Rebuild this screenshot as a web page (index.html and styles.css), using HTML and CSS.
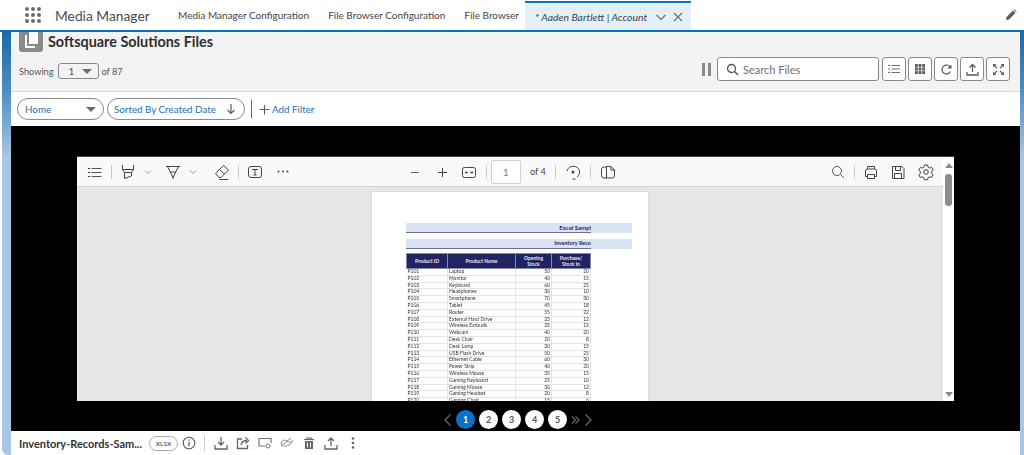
FILE: index.html
```html
<!DOCTYPE html>
<html>
<head>
  <title>Media Manager</title>
  <link rel="stylesheet" href="styles.css">
</head>
<body>
  <header class="topbar">
    <div class="waffle"><i></i><i></i><i></i><i></i><i></i><i></i><i></i><i></i><i></i></div>
    <div class="app-name">Media Manager</div>
    <nav class="tabs">
      <a class="tab">Media Manager Configuration</a>
      <a class="tab">File Browser Configuration</a>
      <a class="tab">File Browser</a>
      <div class="tab-active">
        <span class="tab-title">* Aaden Bartlett | Account</span>
        <svg width="12" height="12" viewBox="0 0 12 12"><path d="M1.500 4l4.500 4.500L10.500 4" fill="none" stroke="#706e6b" stroke-width="1.100"/></svg>
        <svg width="12" height="12" viewBox="0 0 12 12"><path d="M2 2l8 8M10 2l-8 8" fill="none" stroke="#706e6b" stroke-width="1.100"/></svg>
      </div>
    </nav>
    <svg class="pencil" width="12" height="12" viewBox="0 0 12 12"><path d="M1 11l.6-3L8 1.600 10.400 4 4 10.400zM8.800 1l.8-.6L11.600 2.400 11 3.200z" fill="#5c5c5c"/></svg>
  </header>

  <div class="workspace">
    <div class="card">
      <section class="page-head">
        <div class="title-row">
          <div class="title-icon">
            <svg width="16" height="18" viewBox="0 0 16 18"><path d="M6 0h9v12H6z" fill="#fff"/><path d="M2 3h2v11h8v2H2z" fill="#fff"/></svg>
          </div>
          <h1>Softsquare Solutions Files</h1>
        </div>
        <div class="tools-row">
          <span class="muted">Showing</span>
          <div class="page-select"><span>1</span><b class="caret"></b></div>
          <span class="muted">of 87</span>
          <div class="pause"><i></i><i></i></div>
          <div class="search">
            <svg width="13" height="13" viewBox="0 0 13 13"><circle cx="5.500" cy="5.500" r="4" fill="none" stroke="#555" stroke-width="1.300"/><path d="M8.500 8.500L12 12" stroke="#555" stroke-width="1.400"/></svg>
            <span>Search Files</span>
          </div>
          <button class="icon-btn"><svg width="12" height="12" viewBox="0 0 12 12"><path d="M3.500 2.500H12M3.500 6H12M3.500 9.500H12" stroke="#706e6b"/><path d="M0 2.500h2M0 6h2M0 9.500h2" stroke="#706e6b"/></svg></button>
          <button class="icon-btn"><svg width="12" height="12" viewBox="0 0 12 12"><path d="M1 1h2.800v10H1zM4.600 1h2.800v10H4.600zM8.200 1H11v10H8.200z" fill="#5c5c5c"/><path d="M0 4.300h12M0 7.700h12" stroke="#f3f3f3" stroke-width=".6"/></svg></button>
          <button class="icon-btn"><svg width="13" height="13" viewBox="0 0 13 13"><path d="M10.500 8.500A4.500 4.500 0 1 1 9.500 3.200L11 4.500" fill="none" stroke="#5c5c5c" stroke-width="1.200"/><path d="M11.500 1.500v4h-4z" fill="#5c5c5c"/></svg></button>
          <button class="icon-btn"><svg width="13" height="13" viewBox="0 0 13 13"><path d="M6.500 9V2M3.500 4.500l3-3 3 3" fill="none" stroke="#5c5c5c" stroke-width="1.300"/><path d="M1 9v3h11V9" fill="none" stroke="#5c5c5c" stroke-width="1.300"/></svg></button>
          <button class="icon-btn"><svg width="13" height="13" viewBox="0 0 13 13"><path d="M1 1h3.500L1 4.500zM12 1v3.500L8.500 1zM1 12V8.500L4.500 12zM12 12H8.500L12 8.500z" fill="#5c5c5c"/><path d="M2.500 2.500l2.500 2.500M10.500 2.500L8 5M2.500 10.500L5 8M10.500 10.500L8 8" stroke="#5c5c5c" stroke-width="1.100"/></svg></button>
        </div>
      </section>

      <section class="filter-row">
        <div class="pill pill-home"><span>Home</span><b class="caret"></b></div>
        <div class="pill pill-sort">
          <span>Sorted By Created Date</span>
          <svg width="10" height="12" viewBox="0 0 10 12"><path d="M5 1v9M1.500 7L5 10.500 8.500 7" fill="none" stroke="#5c5c5c" stroke-width="1.200"/></svg>
        </div>
        <div class="filter-sep"></div>
        <svg width="11" height="11" viewBox="0 0 11 11"><path d="M5.500 1v9.500M.5 5.500H10.500" stroke="#5c5c5c" stroke-width="1.100"/></svg>
        <a class="add-filter">Add Filter</a>
      </section>

      <section class="stage">
        <div class="viewer">
          <div class="viewer-main">
            <div class="pdf-bar">
              <svg class="tool" viewBox="0 0 20 20"><path d="M6.500 6.500h10M6.500 10.500h10M6.500 14.500h10" stroke="#555" fill="none"/><path d="M3 6.500h2M3 10.500h2M3 14.500h2" stroke="#333"/></svg>
              <span class="bar-sep"></span>
              <svg class="tool" viewBox="0 0 20 20"><path d="M4.500 3v4.500h11V3M4.500 7.500l2 3v6l7-2.500v-3.500l2-3M6.500 10.500h7" fill="none" stroke="#444"/></svg>
              <svg class="chev" viewBox="0 0 12 12"><path d="M3 4.500l3 3 3-3" fill="none" stroke="#999"/></svg>
              <svg class="tool" viewBox="0 0 20 20"><path d="M3 4.500h14M4.500 4.500L10 15.500l5.500-11M7 10h6M10 15.500V17" fill="none" stroke="#444"/></svg>
              <svg class="chev" viewBox="0 0 12 12"><path d="M3 4.500l3 3 3-3" fill="none" stroke="#999"/></svg>
              <svg class="tool eraser" viewBox="0 0 20 20"><path d="M3.500 11.500l8-8 5 4.500-7.500 7.500H7zM7.500 7.500l5 4.500M7 17.500h9" fill="none" stroke="#444"/></svg>
              <span class="bar-sep"></span>
              <svg class="tool" viewBox="0 0 20 20"><rect x="3.500" y="4.500" width="13" height="11" rx="2.500" fill="none" stroke="#444"/><path d="M7 7.500h6M10 7.500v5.500M8.500 13h3" fill="none" stroke="#444"/></svg>
              <svg class="tool dots" viewBox="0 0 20 20"><circle cx="5.500" cy="9.500" r="1" fill="#444"/><circle cx="10" cy="9.500" r="1" fill="#444"/><circle cx="14.500" cy="9.500" r="1" fill="#444"/></svg>

              <div class="bar-center">
                <svg class="tool" viewBox="0 0 20 20"><path d="M6 10.500h8" stroke="#666"/></svg>
                <svg class="tool" viewBox="0 0 20 20"><path d="M6 10.500h9M10.500 6v9" stroke="#444"/></svg>
                <svg class="tool" viewBox="0 0 20 20"><rect x="3.500" y="5.500" width="13" height="10" rx="2" fill="none" stroke="#444"/><path d="M6 10.500h2.500M11.500 10.500H14" stroke="#333" stroke-width="1.600"/></svg>
                <span class="bar-sep"></span>
                <div class="pdf-page-input">1</div>
                <span class="pdf-of">of 4</span>
                <span class="bar-sep"></span>
                <svg class="tool" viewBox="0 0 20 20"><path d="M4 9A6.500 6.500 0 0 1 16.500 9c.3 2.500-.5 4.500-2.500 6" fill="none" stroke="#444"/><circle cx="10" cy="10" r="1.500" fill="#444"/><path d="M9.500 17h3" stroke="#444"/></svg>
                <span class="bar-sep"></span>
                <svg class="tool" viewBox="0 0 20 20"><path d="M8.500 5H6a2.500 2.500 0 0 0-2.500 2.500v6A2.500 2.500 0 0 0 6 16h8.500a2 2 0 0 0 2-2V8l-3.500-3.500H8.500zm0 0v11M13 4.500V8h3.500" fill="none" stroke="#444"/></svg>
              </div>

              <div class="bar-right">
                <svg class="tool" viewBox="0 0 20 20"><circle cx="9" cy="9" r="4.500" fill="none" stroke="#555"/><path d="M12.500 12.500L16 16" stroke="#555"/></svg>
                <span class="bar-sep"></span>
                <svg class="tool" viewBox="0 0 20 20"><path d="M6.500 7V4.500h7V7M6.500 14.500H4.500V9a2 2 0 0 1 2-2h7a2 2 0 0 1 2 2v5.500h-2M6.500 12.500h7v4h-7z" fill="none" stroke="#444"/></svg>
                <svg class="tool save" viewBox="0 0 20 20"><path d="M4.500 4.500h9.500l2 2v10H4.500zM7.500 4.500v4h5v-4M6.500 16.500v-5h7v5" fill="none" stroke="#444"/></svg>
                <svg class="tool gear" viewBox="0 0 20 20"><circle cx="10" cy="10" r="2.300" fill="none" stroke="#444"/><path d="M8.500 3h3l.5 2 1.700 1 2-.6 1.500 2.600-1.500 1.400v2l1.500 1.400-1.500 2.600-2-.6-1.700 1-.5 2h-3l-.5-2-1.700-1-2 .6L2.800 13l1.500-1.400v-2L2.800 8l1.500-2.600 2 .6L8 5z" fill="none" stroke="#444"/></svg>
              </div>
            </div>
            <div class="pdf-area">
              <div class="pdf-page">
                <div class="sheet-title">Excel Sampl</div>
                <div class="sheet-title sheet-sub">Inventory Reco</div>
                <table class="sheet">
                  <thead>
                    <tr><th>Product ID</th><th>Product Name</th><th>Opening Stock</th><th>Purchase/ Stock In</th></tr>
                  </thead>
                  <tbody>
                    <tr><td>P101</td><td>Laptop</td><td>50</td><td>20</td></tr>
                    <tr><td>P102</td><td>Monitor</td><td>40</td><td>15</td></tr>
                    <tr><td>P103</td><td>Keyboard</td><td>60</td><td>25</td></tr>
                    <tr><td>P104</td><td>Headphones</td><td>30</td><td>10</td></tr>
                    <tr><td>P105</td><td>Smartphone</td><td>70</td><td>30</td></tr>
                    <tr><td>P106</td><td>Tablet</td><td>45</td><td>18</td></tr>
                    <tr><td>P107</td><td>Router</td><td>55</td><td>22</td></tr>
                    <tr><td>P108</td><td>External Hard Drive</td><td>25</td><td>12</td></tr>
                    <tr><td>P109</td><td>Wireless Earbuds</td><td>35</td><td>15</td></tr>
                    <tr><td>P110</td><td>Webcam</td><td>40</td><td>20</td></tr>
                    <tr><td>P111</td><td>Desk Chair</td><td>20</td><td>8</td></tr>
                    <tr><td>P112</td><td>Desk Lamp</td><td>30</td><td>15</td></tr>
                    <tr><td>P113</td><td>USB Flash Drive</td><td>50</td><td>25</td></tr>
                    <tr><td>P114</td><td>Ethernet Cable</td><td>60</td><td>30</td></tr>
                    <tr><td>P115</td><td>Power Strip</td><td>40</td><td>20</td></tr>
                    <tr><td>P116</td><td>Wireless Mouse</td><td>35</td><td>15</td></tr>
                    <tr><td>P117</td><td>Gaming Keyboard</td><td>25</td><td>10</td></tr>
                    <tr><td>P118</td><td>Gaming Mouse</td><td>30</td><td>12</td></tr>
                    <tr><td>P119</td><td>Gaming Headset</td><td>20</td><td>8</td></tr>
                    <tr><td>P120</td><td>Gaming Chair</td><td>15</td><td>6</td></tr>
                  </tbody>
                </table>
              </div>
            </div>
          </div>
          <div class="scrollbar">
            <b class="scroll-up"></b>
            <div class="scroll-thumb"></div>
            <b class="scroll-down"></b>
          </div>
        </div>
        <div class="pager">
          <svg width="9" height="14" viewBox="0 0 9 14"><path d="M7.500 1.500L2 7l5.500 5.500" fill="none" stroke="#666" stroke-width="1.400"/></svg>
          <span class="pager-dot is-on">1</span>
          <span class="pager-dot">2</span>
          <span class="pager-dot">3</span>
          <span class="pager-dot">4</span>
          <span class="pager-dot">5</span>
          <svg width="9" height="14" viewBox="0 0 9 14"><path d="M1 3.500L4.500 7 1 10.500M4.500 3.500L8 7l-3.500 3.500" fill="none" stroke="#666" stroke-width="1.200"/></svg>
          <svg width="9" height="14" viewBox="0 0 9 14"><path d="M1.500 1.500L7 7l-5.500 5.500" fill="none" stroke="#666" stroke-width="1.400"/></svg>
        </div>
      </section>

      <footer class="file-bar">
        <strong class="file-name">Inventory-Records-Sam...</strong>
        <span class="file-type">XLSX</span>
        <svg width="14" height="14" viewBox="0 0 14 14"><circle cx="7" cy="7" r="5.800" fill="none" stroke="#555" stroke-width="1.100"/><path d="M7 6v4M7 3.500v1.300" stroke="#555" stroke-width="1.300"/></svg>
        <span class="file-sep"></span>
        <svg width="14" height="14" viewBox="0 0 14 14"><path d="M7 1v8M4 6l3 3 3-3M1 9v4h12V9" fill="none" stroke="#666" stroke-width="1.300"/></svg>
        <svg width="14" height="14" viewBox="0 0 14 14"><path d="M6 3H1.500v9.500h10V9M5 9c.5-3 2.500-4.500 6-4.500M9.500 1.500l3 3-3 3" fill="none" stroke="#666" stroke-width="1.300"/></svg>
        <svg width="14" height="14" viewBox="0 0 14 14"><path d="M7 10H1V2.500h12V7" fill="none" stroke="#777" stroke-width="1.200"/><circle cx="10" cy="10" r="2" fill="none" stroke="#777"/></svg>
        <svg width="14" height="14" viewBox="0 0 14 14"><path d="M1 7c1.500-3 4-3.500 6-2 2 2 4 1.500 6-1M1 10l10-8M1 7c1.500 3 3 3.500 5 3 2 0 4-1 6-4" fill="none" stroke="#888"/></svg>
        <svg width="14" height="14" viewBox="0 0 14 14"><path d="M2 3.500h10M5 3.500V2h4v1.500" fill="none" stroke="#666" stroke-width="1.200"/><path d="M3 5h8v8H3z" fill="#666"/><path d="M5.500 6.500v5M8.500 6.500v5" stroke="#fff"/></svg>
        <svg width="14" height="14" viewBox="0 0 14 14"><path d="M7 10V2M4 5l3-3 3 3M1 9v4h12V9" fill="none" stroke="#666" stroke-width="1.300"/></svg>
        <svg width="14" height="14" viewBox="0 0 14 14"><circle cx="7" cy="2.500" r="1.300" fill="#666"/><circle cx="7" cy="7" r="1.300" fill="#666"/><circle cx="7" cy="11.500" r="1.300" fill="#666"/></svg>
      </footer>
    </div>
  </div>
</body>
</html>
```

FILE: styles.css
```css
html, body {
  margin: 0;
  height: 455px;
  overflow: hidden;
}
body {
  font-family: Lato, "Noto Sans", sans-serif;
  font-size: 11px;
  color: #444;
  background: #fff;
  display: flex;
  flex-direction: column;
  filter: blur(0.3px);
}
svg {
  flex: none;
  display: block;
}

/* top navigation */
.topbar {
  height: 30px;
  display: flex;
  align-items: center;
  border-bottom: 2px solid #0a70c8;
  background: #fff;
  flex: none;
}
.waffle {
  margin-left: 25px;
  width: 16px;
  display: grid;
  grid-template-columns: repeat(3, 4px);
  gap: 2px;
}
.waffle i {
  width: 4px;
  height: 4px;
  border-radius: 50%;
  background: #6d6d6d;
}
.app-name {
  margin-left: 14px;
  width: 123px;
  font-size: 13.800px;
  color: #4a4a4a;
}
.tabs {
  display: flex;
  align-items: center;
  height: 30px;
}
.tab {
  margin-right: 19px;
  font-size: 10px;
  white-space: nowrap;
  color: #444;
}
.tab-active {
  box-sizing: border-box;
  margin-left: -13px;
  margin-top: 1px;
  width: 166px;
  height: 29px;
  padding-left: 10px;
  display: flex;
  align-items: center;
  background: #e3f0fa;
  border-top: 2px solid #0a70c8;
}
.tab-title {
  width: 120px;
  font-size: 10.400px;
  font-style: italic;
  white-space: nowrap;
  color: #444;
}
.tab-active svg + svg {
  margin-left: 5px;
}
.pencil {
  margin-left: auto;
  margin-right: 7px;
}

/* coloured strip around the app */
.workspace {
  flex: 1;
  min-height: 0;
  margin-left: 2px;
  padding: 0 4px 0 9px;
  border-bottom-left-radius: 6px;
  background: linear-gradient(180deg, #1b6aa8 0, #4f8fc4 60px, #a9c6e4 125px, #a9c6e4 100%);
}
.card {
  height: 100%;
  display: flex;
  flex-direction: column;
  background: #fff;
  overflow: hidden;
}

/* title area */
.page-head {
  box-sizing: border-box;
  height: 60px;
  flex: none;
  padding-left: 8px;
  padding-right: 8px;
  background: #f3f3f3;
  border-bottom: 1px solid #d8d8d8;
}
.title-row {
  height: 25px;
  display: flex;
}
.title-icon {
  width: 24px;
  height: 20px;
  background: #8a8a8a;
  border-radius: 0 0 3px 3px;
  display: flex;
  justify-content: center;
}
h1 {
  margin: 0 0 0 5px;
  font-size: 14.400px;
  line-height: 20px;
  font-weight: 700;
  color: #2e2e2e;
}
.tools-row {
  display: flex;
  align-items: center;
  height: 24px;
}
.muted {
  margin-top: 4px;
  font-size: 9.200px;
  color: #555;
}
.page-select {
  box-sizing: border-box;
  width: 41px;
  height: 16px;
  margin: 4px 3px 0 4px;
  padding: 0 6px 0 10px;
  border: 1px solid #8a8a8a;
  border-radius: 3px;
  display: flex;
  align-items: center;
  justify-content: space-between;
  font-size: 10px;
  color: #555;
}
.caret {
  width: 0;
  height: 0;
  border-left: 5px solid transparent;
  border-right: 5px solid transparent;
  border-top: 5px solid #6d6d6d;
}
.pause {
  margin-left: auto;
  margin-right: 6px;
  display: flex;
  gap: 3px;
}
.pause i {
  width: 3px;
  height: 13px;
  background: #8a8a8a;
}
.search {
  box-sizing: border-box;
  width: 162px;
  height: 24px;
  margin-right: 3px;
  padding-left: 8px;
  display: flex;
  align-items: center;
  gap: 4px;
  background: #fff;
  border: 1px solid #8a8a8a;
  border-radius: 3px;
  font-size: 11px;
  color: #707070;
}
.icon-btn {
  box-sizing: border-box;
  width: 24px;
  height: 24px;
  margin-right: 2px;
  padding: 0;
  display: flex;
  align-items: center;
  justify-content: center;
  background: #fff;
  border: 1px solid #8a8a8a;
  border-radius: 3px;
}

/* filters */
.filter-row {
  box-sizing: border-box;
  height: 34px;
  flex: none;
  padding-left: 6px;
  display: flex;
  align-items: center;
}
.pill {
  box-sizing: border-box;
  height: 22px;
  display: flex;
  align-items: center;
  justify-content: space-between;
  border: 1px solid #8a8a8a;
  border-radius: 11px;
  font-size: 9.800px;
  white-space: nowrap;
  color: #1b6fb5;
}
.pill-home {
  width: 87px;
  margin-right: 3px;
  padding: 0 7px;
}
.pill-sort {
  width: 138px;
  padding: 0 8px 0 6px;
}
.filter-sep {
  width: 1px;
  height: 18px;
  margin: 0 7px 0 6px;
  background: #666;
}
.add-filter {
  margin-left: 2px;
  font-size: 9.800px;
  color: #1b6fb5;
}

/* black document stage */
.stage {
  flex: 1;
  min-height: 0;
  display: flex;
  flex-direction: column;
  background: #000;
}
.viewer {
  width: 877px;
  height: 245px;
  margin: 30px 0 0 66px;
  flex: none;
  display: flex;
  overflow: hidden;
}
.viewer-main {
  flex: 1;
  min-width: 0;
  display: flex;
  flex-direction: column;
}
.pdf-bar {
  box-sizing: border-box;
  height: 31px;
  flex: none;
  padding: 0 7px 0 8px;
  display: flex;
  align-items: center;
  background: #f9f9f9;
  border-bottom: 1px solid #d4d4d4;
  border-top: 1px solid #444;
}
.tool {
  width: 20px;
  height: 20px;
}
.chev {
  width: 12px;
  height: 12px;
  margin: 0 9px 0 4px;
}
.eraser {
  margin-left: 4px;
}
.dots {
  margin-left: 8px;
}
.bar-sep {
  width: 1px;
  height: 14px;
  margin: 0 6px;
  flex: none;
  background: #ccc;
}
.bar-center {
  margin-left: 112px;
  display: flex;
  align-items: center;
  gap: 7px;
}
.bar-center .bar-sep {
  margin: 0;
}
.pdf-page-input {
  box-sizing: border-box;
  width: 30px;
  height: 24px;
  margin-left: -3px;
  background: #fff;
  border: 1px solid #d0d0d0;
  border-radius: 2px;
  display: flex;
  align-items: center;
  justify-content: center;
  font-size: 10px;
  color: #a87a3a;
}
.pdf-of {
  margin: 0 2px;
  font-size: 9.200px;
  color: #444;
}
.bar-right {
  margin-left: auto;
  display: flex;
  align-items: center;
}
.save {
  margin-left: 7px;
}
.gear {
  margin-left: 8px;
}
.pdf-area {
  flex: 1;
  min-height: 0;
  padding-top: 5px;
  display: flex;
  justify-content: center;
  background: #e6e6e6;
  overflow: hidden;
}
.pdf-page {
  box-sizing: border-box;
  width: 276px;
  height: 360px;
  padding: 31px 16px 0 34px;
  flex: none;
  background: #fff;
  box-shadow: 0 0 2px #ccc;
}
.sheet-title {
  box-sizing: border-box;
  height: 10px;
  margin-bottom: 6px;
  padding-right: 41px;
  background: linear-gradient(to top, #6b6b96 1px, #d9e2f3 1px);
  background-size: 185px 100%;
  background-repeat: no-repeat;
  background-color: #d9e2f3;
  text-align: right;
  font-size: 6px;
  line-height: 9px;
  font-weight: 700;
  color: #1f2a60;
}
.sheet-sub {
  margin-bottom: 4px;
  font-size: 5.500px;
}
.sheet {
  width: 185px;
  border-collapse: collapse;
  table-layout: fixed;
  font-size: 5px;
  color: #333;
  filter: blur(0.2px);
}
.sheet th {
  box-sizing: border-box;
  height: 15px;
  padding: 0 2px;
  background: #1f2560;
  border: 1px solid #8888a8;
  color: #e8e8f4;
  line-height: 6px;
  font-weight: 700;
  text-align: center;
}
.sheet th:nth-child(1) { width: 41px; }
.sheet th:nth-child(2) { width: 68px; }
.sheet th:nth-child(3) { width: 36px; }
.sheet td {
  height: 5.800px;
  padding: 0 1px;
  line-height: 5.800px;
  border-bottom: 1px solid #e4e4e4;
  border-right: 1px solid #e4e4e4;
  overflow: hidden;
}
.sheet td:nth-child(n+3) {
  text-align: right;
}
.scrollbar {
  width: 11px;
  flex: none;
  background: #fff;
  display: flex;
  flex-direction: column;
  align-items: center;
  border-top: 1px solid #444;
}
.scroll-up {
  margin-top: 6px;
  width: 0;
  height: 0;
  border-left: 4px solid transparent;
  border-right: 4px solid transparent;
  border-bottom: 5px solid #8a8a8a;
}
.scroll-thumb {
  width: 7px;
  height: 32px;
  margin-top: 6px;
  border-radius: 3px;
  background: #8e8e8e;
}
.scroll-down {
  margin-top: auto;
  margin-bottom: 4px;
  width: 0;
  height: 0;
  border-left: 4px solid transparent;
  border-right: 4px solid transparent;
  border-top: 5px solid #8a8a8a;
}
.pager {
  flex: 1;
  padding: 9px 0 3px 432px;
  display: flex;
  align-items: center;
  gap: 4px;
}
.pager-dot {
  box-sizing: border-box;
  width: 19px;
  height: 19px;
  border-radius: 50%;
  display: flex;
  align-items: center;
  justify-content: center;
  background: #fff;
  font-size: 9px;
  font-weight: 700;
  color: #555;
}
.pager-dot.is-on {
  background: #0a70c8;
  color: #fff;
}

/* bottom file bar */
.file-bar {
  height: 24px;
  flex: none;
  padding-left: 8px;
  display: flex;
  align-items: center;
  gap: 8px;
  background: #fff;
}
.file-name {
  width: 122px;
  font-size: 11px;
  white-space: nowrap;
  color: #333;
}
.file-type {
  box-sizing: border-box;
  width: 29px;
  height: 15px;
  margin-right: -4px;
  display: flex;
  align-items: center;
  justify-content: center;
  border: 1px solid #aaa;
  border-radius: 8px;
  font-size: 6.500px;
  font-weight: 600;
  color: #555;
}
.file-sep {
  width: 1px;
  height: 16px;
  margin: 0 1px 0 0;
  background: #ccc;
}
```
